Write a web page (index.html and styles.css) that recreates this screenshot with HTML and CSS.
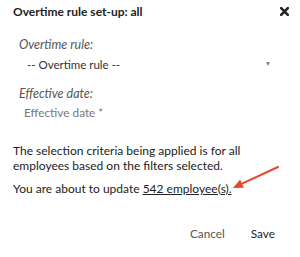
FILE: index.html
```html
<!DOCTYPE html>
<html>
<head>
<meta charset="utf-8">
<link rel="stylesheet" href="styles.css">
</head>
<body>
<div class="dialog">
  <div class="header">
    <h1 class="title">Overtime rule set-up: all</h1>
    <svg class="close" width="9" height="9" viewBox="0 0 9 9" aria-label="Close">
      <path d="M1.2 1.2 L7.8 7.8 M7.8 1.2 L1.2 7.8" stroke="#222" stroke-width="2.6" stroke-linecap="square"/>
    </svg>
  </div>
  <div class="form">
    <label class="label">Overtime rule:</label>
    <div class="select">
      <span class="select-text">-- Overtime rule --</span>
      <span class="caret"></span>
    </div>
    <label class="label label-date">Effective date:</label>
    <div class="input">Effective date *</div>
  </div>
  <p class="text">The selection criteria being applied is for all employees based on the filters selected.</p>
  <p class="text update">You are about to update <a class="link">542 employee(s).</a></p>
  <svg class="arrow" width="60" height="32" viewBox="0 0 60 32">
    <line x1="53" y1="7" x2="17" y2="23.7" stroke="#e8472b" stroke-width="2" stroke-linecap="round"/>
    <polygon points="8,28 18.9,27.8 15.1,19.6" fill="#e8472b"/>
  </svg>
  <div class="actions">
    <button class="btn">Cancel</button>
    <button class="btn save">Save</button>
  </div>
</div>
</body>
</html>
```
FILE: styles.css
```css
html, body {
  margin: 0;
  padding: 0;
  background: #fff;
}
body {
  font-family: Lato, "Open Sans", sans-serif;
  color: #222;
  width: 300px;
  height: 257px;
  overflow: hidden;
}
.dialog {
  position: relative;
  padding: 0 11px 0 13px;
}
.header {
  display: flex;
  justify-content: space-between;
  align-items: center;
  height: 24px;
}
.title {
  margin: 0;
  font-size: 12px;
  line-height: 24px;
  font-weight: 700;
  color: #222;
}
.close {
  display: block;
  margin-top: -1px;
}
.form {
  padding-left: 6px;
  margin-top: 11px;
}
.label {
  display: block;
  font-size: 12.5px;
  font-style: italic;
  color: #555;
  height: 19px;
  line-height: 19px;
}
.label-date {
  margin-top: 10px;
}
.select {
  display: flex;
  justify-content: space-between;
  align-items: center;
  padding-left: 8px;
  padding-right: 19px;
  height: 20px;
  font-size: 11.5px;
  color: #333;
}
.caret {
  width: 0;
  height: 0;
  border-left: 2.5px solid transparent;
  border-right: 2.5px solid transparent;
  border-top: 4px solid #888;
}
.input {
  padding-left: 5px;
  height: 19px;
  line-height: 19px;
  font-size: 11.8px;
  color: #777;
}
.text {
  margin: 0;
  font-size: 12px;
  line-height: 15px;
  color: #222;
}
.form + .text {
  margin-top: 21px;
}
.update {
  margin-top: 8px;
}
.link {
  text-decoration: underline;
  color: #222;
}
.arrow {
  position: absolute;
  left: 225px;
  top: 160px;
}
.actions {
  display: flex;
  justify-content: flex-end;
  align-items: center;
  gap: 26px;
  height: 20px;
  margin-top: 28px;
  padding-right: 14px;
}
.btn {
  border: none;
  background: none;
  padding: 0;
  font-family: inherit;
  font-size: 11.8px;
  line-height: 20px;
  color: #555;
}
.save {
  color: #222;
}
```
